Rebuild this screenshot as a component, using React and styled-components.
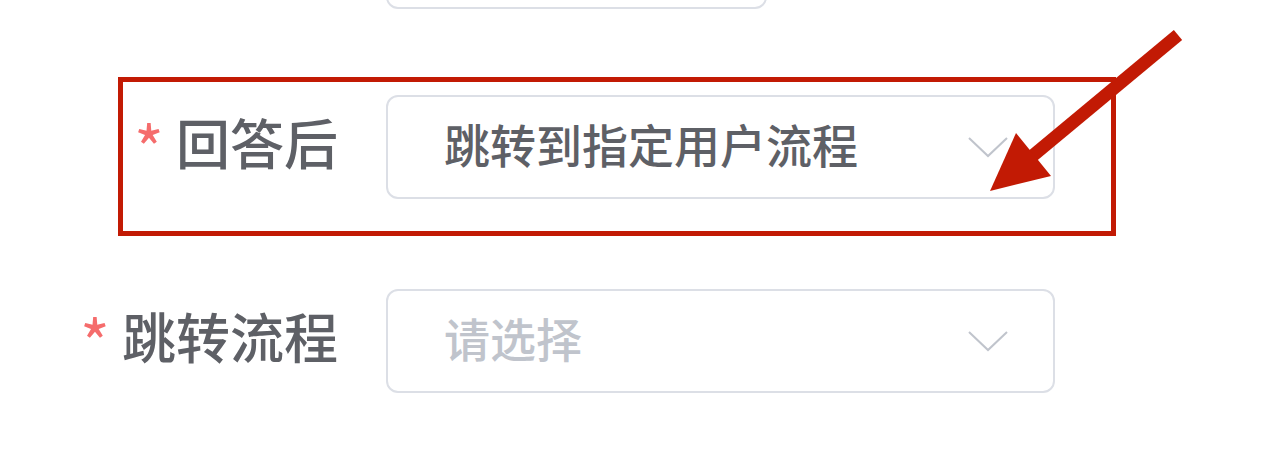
import React from 'react'
import styled, { createGlobalStyle } from 'styled-components'

const GlobalStyle = createGlobalStyle`
  html, body {
    margin: 0;
    padding: 0;
    background: #fff;
  }
  body {
    font-family: "Noto Sans CJK SC", "Noto Sans", sans-serif;
  }
`

const Page = styled.div`
  position: relative;
  width: 1280px;
  height: 458px;
  overflow: hidden;
  background: #fff;
`

const Form = styled.div`
  display: flex;
  flex-direction: column;
  margin-top: -95px;
`

const FormItem = styled.div`
  position: relative;
  display: flex;
  align-items: center;
  margin-bottom: ${({ $mb }) => $mb}px;
`

// label box is shifted a few px up so the glyphs sit like the original
const Label = styled.label`
  box-sizing: border-box;
  width: 338px;
  height: 104px;
  margin-right: 48px;
  text-align: right;
  font-size: 54px;
  font-weight: 500;
  line-height: 94px;
  padding-bottom: 10px;
  color: #5e6066;
  white-space: nowrap;
  ${({ $required }) => $required && `
    &::before {
      content: "*";
      font-size: 64px;
      font-weight: 400;
      line-height: 0;
      vertical-align: -9px;
      color: #f56c6c;
      margin-right: 12px;
    }
  `}
`

const Select = styled.div`
  box-sizing: border-box;
  width: ${({ $width }) => $width}px;
  height: 104px;
  display: flex;
  align-items: center;
  justify-content: space-between;
  padding: 0 45px 0 56px;
  border: 2px solid #dcdfe6;
  border-radius: 12px;
  background: #fff;
`

const Value = styled.span`
  font-size: 46px;
  font-weight: 500;
  margin-bottom: 8px;
  color: ${({ $placeholder }) => ($placeholder ? '#c0c4cc' : '#5e6066')};
  white-space: nowrap;
`

const Highlight = styled.div`
  position: absolute;
  left: 118px;
  top: -18px;
  width: 998px;
  height: 159px;
  box-sizing: border-box;
  border: 5px solid #c21a04;
  pointer-events: none;
`

const Annotation = styled.svg`
  position: absolute;
  left: 0;
  top: 0;
  pointer-events: none;
`

function Chevron() {
  return (
    <svg width="40" height="22" viewBox="0 0 40 22">
      <polyline points="1,2 20,20 39,2" fill="none" stroke="#c0c4cc" strokeWidth="2" />
    </svg>
  )
}

function App() {
  return (
    <Page>
      <GlobalStyle />
      <Form>
        <FormItem $mb={86}>
          <Label />
          <Select $width={381}>
            <Value $placeholder></Value>
          </Select>
        </FormItem>
        <FormItem $mb={90}>
          <Label $required>回答后</Label>
          <Select $width={669}>
            <Value>跳转到指定用户流程</Value>
            <Chevron />
          </Select>
          <Highlight />
        </FormItem>
        <FormItem $mb={0}>
          <Label $required>跳转流程</Label>
          <Select $width={669}>
            <Value $placeholder>请选择</Value>
            <Chevron />
          </Select>
        </FormItem>
      </Form>
      <Annotation width="1280" height="458" viewBox="0 0 1280 458">
        <line x1="1178" y1="35" x2="1030" y2="158" stroke="#c21a04" strokeWidth="13" />
        <polygon points="990,191 1016,133 1051,176" fill="#c21a04" />
      </Annotation>
    </Page>
  )
}

export default App
